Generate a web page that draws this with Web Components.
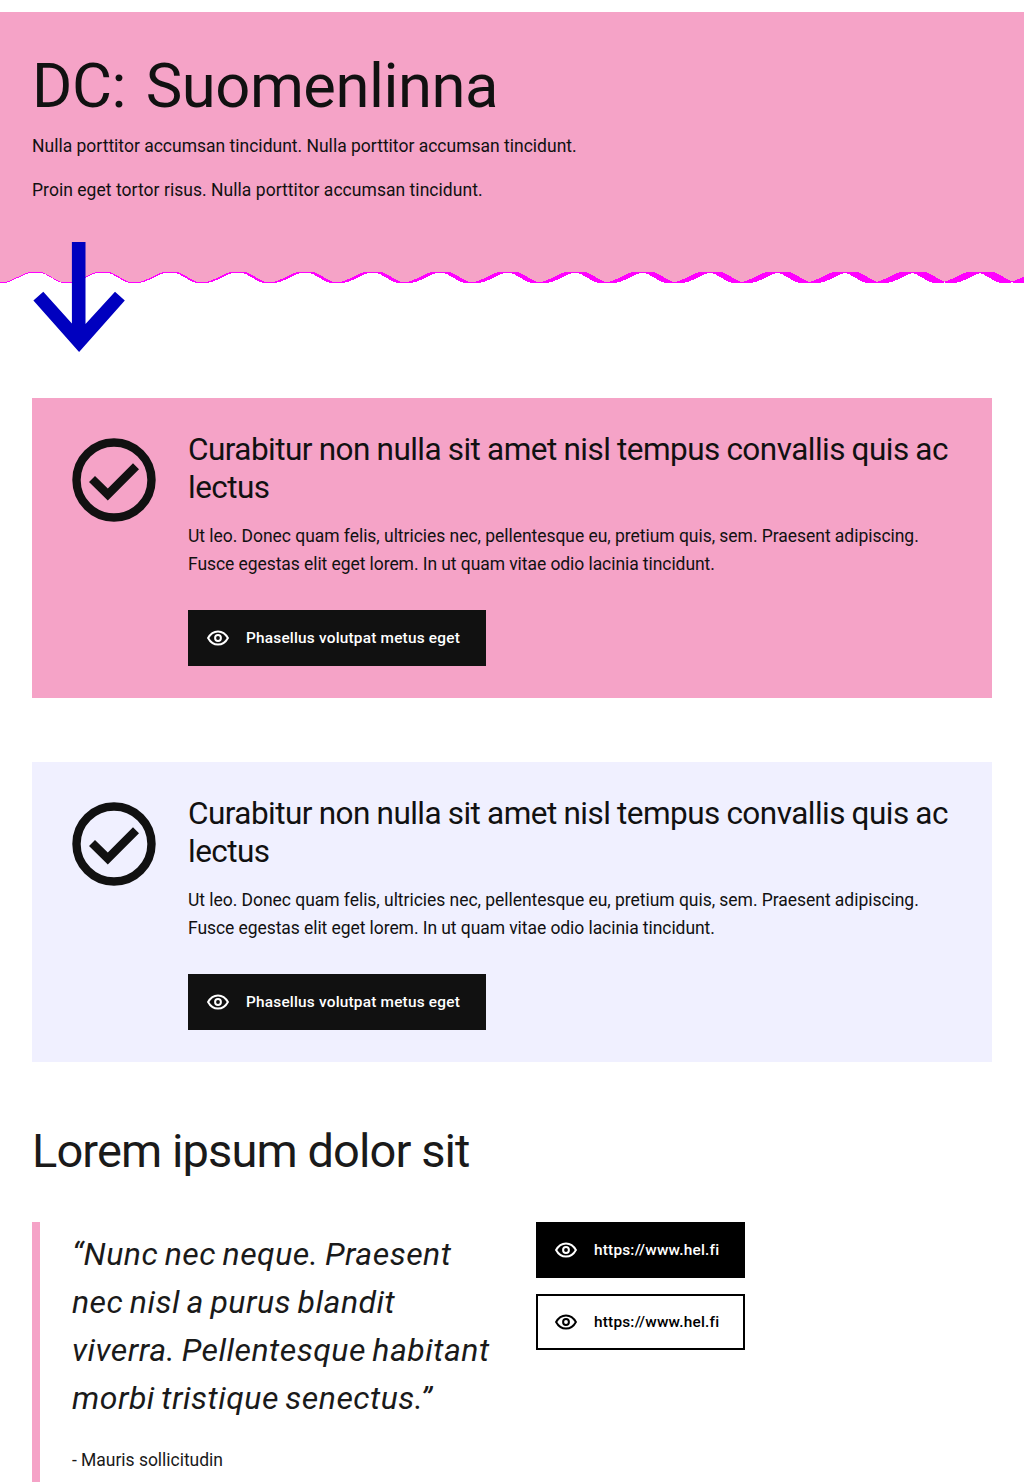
<!DOCTYPE html>
<html lang="en">
<head>
<meta charset="utf-8">
<title>DC: Suomenlinna</title>
<style>
body{margin:0;background:#fff;color:#111;font:17.5px/28px Roboto,"Liberation Sans",sans-serif;height:1482px;overflow:hidden}
main{padding:0 32px;margin-top:114px}
</style>
</head>
<body>
<page-hero heading="DC: Suomenlinna">
  <p style="margin:0 0 16px">Nulla porttitor accumsan tincidunt. Nulla porttitor accumsan tincidunt.</p>
  <p style="margin:0;letter-spacing:.04px">Proin eget tortor risus. Nulla porttitor accumsan tincidunt.</p>
</page-hero>
<main>
  <info-card style="--card:#f5a3c7">
    <span slot="heading">Curabitur non nulla sit amet nisl tempus convallis quis ac<br>lectus</span>
    Ut leo. Donec quam felis, ultricies nec, pellentesque eu, pretium quis, sem. Praesent adipiscing.<br><span style="letter-spacing:-.07px">Fusce egestas elit eget lorem. In ut quam vitae odio lacinia tincidunt.</span>
    <link-button slot="action" style="width:298px">Phasellus volutpat metus eget</link-button>
  </info-card>
  <info-card style="--card:#f0f0ff">
    <span slot="heading">Curabitur non nulla sit amet nisl tempus convallis quis ac<br>lectus</span>
    Ut leo. Donec quam felis, ultricies nec, pellentesque eu, pretium quis, sem. Praesent adipiscing.<br><span style="letter-spacing:-.07px">Fusce egestas elit eget lorem. In ut quam vitae odio lacinia tincidunt.</span>
    <link-button slot="action" style="width:298px">Phasellus volutpat metus eget</link-button>
  </info-card>
  <quote-section heading="Lorem ipsum dolor sit">
    “Nunc nec neque. Praesent<br>nec nisl a purus blandit<br>viverra. Pellentesque habitant<br>morbi tristique senectus.”
    <span slot="author">- Mauris sollicitudin</span>
    <link-button slot="links" style="--fill:#000;--line:#000;width:209px">https://www.hel.fi</link-button>
    <link-button slot="links" style="--fill:#fff;--line:#000;--ink:#000;width:209px">https://www.hel.fi</link-button>
  </quote-section>
</main>
<script>
class EyeIcon extends HTMLElement{
  constructor(){
    super();
    this.attachShadow({mode:'open'}).innerHTML=`
<style>:host{display:block;width:24px;height:24px}svg{display:block}</style>
<svg width="24" height="24" viewBox="0 0 24 24" fill="none" stroke="currentColor" stroke-width="2"><path d="M2.1 12C4.2 8.1 7.6 5.4 12 5.4S19.8 8.1 21.9 12C19.8 15.9 16.4 18.6 12 18.6S4.2 15.9 2.1 12Z"/><circle cx="12" cy="12" r="2.9"/></svg>`;
  }
}
customElements.define('eye-icon',EyeIcon);

class LinkButton extends HTMLElement{
  constructor(){
    super();
    this.attachShadow({mode:'open'}).innerHTML=`
<style>
:host{display:flex;align-items:center;gap:16px;box-sizing:border-box;height:56px;padding:0 16px;border:2px solid var(--line,#111);background:var(--fill,#111);color:var(--ink,#fff);font-size:15.4px;line-height:24px;font-weight:500;letter-spacing:.2px;white-space:nowrap}
</style>
<eye-icon></eye-icon><slot></slot>`;
  }
}
customElements.define('link-button',LinkButton);

class WaveEdge extends HTMLElement{
  constructor(){
    super();
    const root=this.attachShadow({mode:'open'});
    // Two waves with slightly different periods; the accent shows between them.
    const wave=(x,period)=>{
      const f=(((x-36)/period)%1+1)%1;
      const t=f<.455?f/.455*.5:.5+(f-.455)/.545*.5;
      return {y:9.5-5.7*Math.cos(t*2*Math.PI),rising:f>.455};
    };
    let pink='M0 0',accent='M0 0';
    for(let x=0;x<1024;x++){
      const a=wave(x+.5,67),b=wave(x+.5,68);
      const lo=Math.min(a.y,b.y),hi=Math.max(a.y,b.y);
      const up=Math.min(14,Math.max(4,Math.round(lo-.5)));
      let down=Math.round(hi+.15);
      if(a.rising&&b.rising||hi<4.8||hi>14.2)down=Math.max(down,up+1);
      pink+='V'+up+'h1';
      accent+='V'+Math.min(15,down)+'h1';
    }
    root.innerHTML=`
<style>:host{display:block;height:16px}svg{display:block}</style>
<svg width="1024" height="16" shape-rendering="crispEdges"><path fill="#f0f" d="${accent}V0Z"/><path fill="#f5a3c7" d="${pink}V0Z"/></svg>`;
  }
}
customElements.define('wave-edge',WaveEdge);

class PageHero extends HTMLElement{
  connectedCallback(){
    this.attachShadow({mode:'open'}).innerHTML=`
<style>
:host{display:block;position:relative;margin-top:12px}
.band{display:flow-root;box-sizing:border-box;height:256px;padding:42px 32px 0;background:#f5a3c7}
h1{margin:0 0 14px;font-size:61.5px;line-height:64px;font-weight:400;letter-spacing:-.45px;word-spacing:5px}
.arrow{position:absolute;left:32px;top:228px}
</style>
<div class="band"><h1>${this.getAttribute('heading')}</h1><slot></slot></div>
<wave-edge></wave-edge>
<svg class="arrow" width="96" height="114" viewBox="32 240 96 114"><path fill="#0000bf" d="M71.9 242H85.5V324L115 291.7L124.8 300.5L79.1 352L33.4 300.5L43.3 291.7L71.9 323.5Z"/></svg>`;
  }
}
customElements.define('page-hero',PageHero);

class InfoCard extends HTMLElement{
  constructor(){
    super();
    this.attachShadow({mode:'open'}).innerHTML=`
<style>
:host{display:flex;gap:32px;padding:32px 40px;margin-bottom:64px;background:var(--card)}
svg{flex:none;margin-top:8px}
h2{margin:0 0 15px;padding-top:1px;font-size:31.5px;line-height:38px;font-weight:400;letter-spacing:-.53px;word-spacing:-.6px;white-space:nowrap}
.body{letter-spacing:-.04px;white-space:nowrap;margin-bottom:32px}
</style>
<svg width="84" height="84" viewBox="72 438 84 84"><circle cx="114" cy="480" r="37.5" fill="none" stroke="#111" stroke-width="8.4"/><path fill="#111" d="M89 481.9L95 475.9L107.8 488.6L133 463.3L139 469.3L107.8 500.6Z"/></svg>
<div><h2><slot name="heading"></slot></h2><div class="body"><slot></slot></div><slot name="action"></slot></div>`;
  }
}
customElements.define('info-card',InfoCard);

class QuoteSection extends HTMLElement{
  connectedCallback(){
    this.attachShadow({mode:'open'}).innerHTML=`
<style>
:host{display:block;color:#1a1a1a}
h2{margin:0 0 46px;font-size:47px;line-height:50px;font-weight:400;letter-spacing:-.9px}
.row{display:flex;align-items:flex-start;gap:32px}
.quote{box-sizing:border-box;width:472px;height:292px;padding:8px 0 0 32px;border-left:8px solid #f5a3c7}
blockquote{margin:0 0 24px;font-size:32px;line-height:48px;font-style:italic;letter-spacing:.48px;word-spacing:-1.8px;white-space:nowrap}
.author{letter-spacing:-.03px}
.links{display:flex;flex-direction:column;gap:16px}
</style>
<h2>${this.getAttribute('heading')}</h2>
<div class="row"><div class="quote"><blockquote><slot></slot></blockquote><div class="author"><slot name="author"></slot></div></div><div class="links"><slot name="links"></slot></div></div>`;
  }
}
customElements.define('quote-section',QuoteSection);
</script>
</body>
</html>
